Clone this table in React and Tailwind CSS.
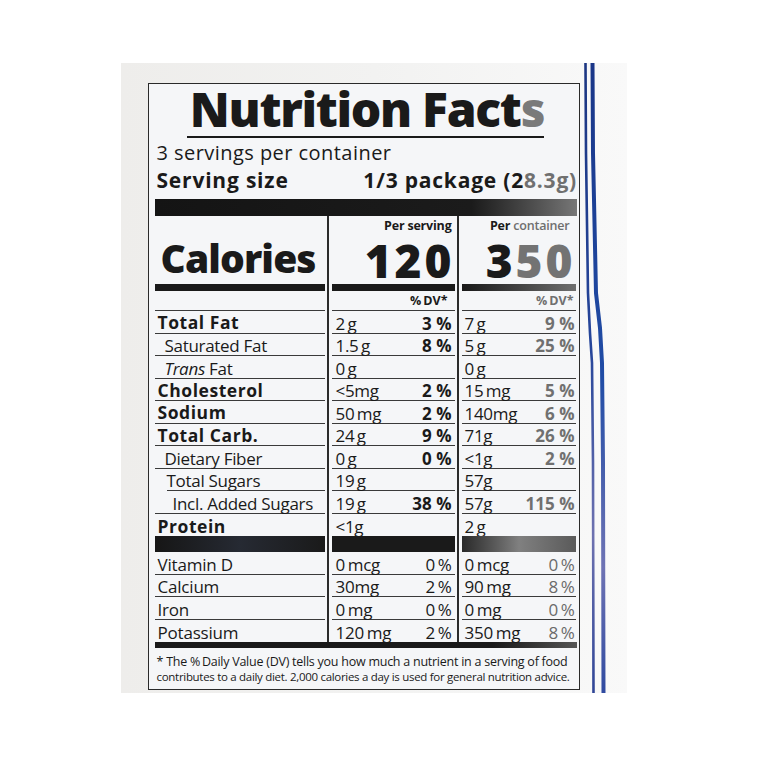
import React from "react";

const F = "font-['Open_Sans','Noto_Sans',sans-serif]";
const TS = "\u2009";

function Divider() {
  return (
    <div className="w-[7px] flex justify-center self-stretch shrink-0">
      <div className="w-[2px] bg-[#2b2b2b]" />
    </div>
  );
}

const nutrients = [
  { l: "Total Fat", b: true, ind: "pl-[3px]", a: `2${TS}g`, p: "3 %", a2: `7${TS}g`, p2: "9 %" },
  { l: "Saturated Fat", ind: "pl-[10px]", a: `1.5${TS}g`, p: "8 %", a2: `5${TS}g`, p2: "25 %" },
  { l: "Trans Fat", trans: true, ind: "pl-[10px]", a: `0${TS}g`, a2: `0${TS}g` },
  { l: "Cholesterol", b: true, ind: "pl-[3px]", a: "<5mg", p: "2 %", a2: `15${TS}mg`, p2: "5 %" },
  { l: "Sodium", b: true, ind: "pl-[3px]", a: `50${TS}mg`, p: "2 %", a2: "140mg", p2: "6 %" },
  { l: "Total Carb.", b: true, ind: "pl-[3px]", a: `24${TS}g`, p: "9 %", a2: "71g", p2: "26 %" },
  { l: "Dietary Fiber", ind: "pl-[10px]", a: `0${TS}g`, p: "0 %", a2: "<1g", p2: "2 %" },
  { l: "Total Sugars", ind: "pl-0", lineInd: true, a: `19${TS}g`, a2: "57g" },
  { l: "Incl. Added Sugars", ind: "pl-[18px]", a: `19${TS}g`, p: "38 %", a2: "57g", p2: "115 %" },
  { l: "Protein", b: true, ind: "pl-[3px]", a: "<1g", a2: `2${TS}g`, noLine: true },
];

const vitamins = [
  { l: "Vitamin D", a: `0${TS}mcg`, p: `0${TS}%`, a2: `0${TS}mcg`, p2: `0${TS}%` },
  { l: "Calcium", a: "30mg", p: `2${TS}%`, a2: `90${TS}mg`, p2: `8${TS}%` },
  { l: "Iron", a: `0${TS}mg`, p: `0${TS}%`, a2: `0${TS}mg`, p2: `0${TS}%` },
  { l: "Potassium", a: `120${TS}mg`, p: `2${TS}%`, a2: `350${TS}mg`, p2: `8${TS}%`, noLine: true },
];

function NutrientRow({ r }) {
  const line = r.noLine ? "" : "border-b border-[#3a3a3a]";
  return (
    <div className="flex h-[22.5px]">
      <div className="w-[170px] shrink-0 flex">
        <div
          className={`${r.lineInd ? "ml-[12px]" : ""} flex-1 flex items-end pb-[1px] ${line} ${r.ind} leading-none ${
            r.b ? "font-bold text-[17.5px] tracking-[0.55px]" : "font-normal text-[17px] tracking-[-0.3px]"
          }`}
        >
          {r.trans ? (
            <span>
              <i>Trans</i> Fat
            </span>
          ) : (
            r.l
          )}
        </div>
      </div>
      <Divider />
      <div className={`w-[123px] shrink-0 flex items-end justify-between pb-[1px] pl-[4px] pr-[3px] ${line} text-[17px] leading-none tracking-[-0.3px]`}>
        <span>{r.a}</span>
        <span className="font-bold tracking-[0px]">{r.p}</span>
      </div>
      <Divider />
      <div className={`w-[114px] shrink-0 flex items-end justify-between pb-[1px] pl-[3px] pr-[1px] ${line} text-[17px] leading-none tracking-[-0.3px]`}>
        <span>{r.a2}</span>
        <span className="font-bold tracking-[0px] text-[#707070]">{r.p2}</span>
      </div>
    </div>
  );
}

function VitaminRow({ r }) {
  const line = r.noLine ? "" : "border-b border-[#3a3a3a]";
  return (
    <div className="flex h-[22.5px]">
      <div className={`w-[170px] shrink-0 flex items-end pb-[1px] pl-[3px] ${line} text-[17px] leading-none tracking-[-0.2px]`}>
        {r.l}
      </div>
      <Divider />
      <div className={`w-[123px] shrink-0 flex items-end justify-between pb-[1px] pl-[4px] pr-[3px] ${line} text-[17px] leading-none tracking-[-0.2px]`}>
        <span>{r.a}</span>
        <span>{r.p}</span>
      </div>
      <Divider />
      <div className={`w-[114px] shrink-0 flex items-end justify-between pb-[1px] pl-[3px] pr-[1px] ${line} text-[17px] leading-none tracking-[-0.2px]`}>
        <span>{r.a2}</span>
        <span className="text-[#6a6a6a]">{r.p2}</span>
      </div>
    </div>
  );
}

function BlueLines() {
  return (
    <svg width="47" height="630" viewBox="0 0 47 630" className="shrink-0 block">
      <defs>
        <linearGradient id="bl1" gradientUnits="userSpaceOnUse" x1="0" y1="0" x2="0" y2="630">
          <stop offset="0" stopColor="#1c3682" />
          <stop offset="0.45" stopColor="#25459a" />
          <stop offset="0.75" stopColor="#6e72b0" />
          <stop offset="1" stopColor="#2f4596" />
        </linearGradient>
        <linearGradient id="bl2" gradientUnits="userSpaceOnUse" x1="0" y1="0" x2="0" y2="630">
          <stop offset="0" stopColor="#1a3688" />
          <stop offset="0.5" stopColor="#204ca6" />
          <stop offset="0.8" stopColor="#6e73b4" />
          <stop offset="1" stopColor="#2f4aa0" />
        </linearGradient>
      </defs>
      <path d="M5.5 0 L6 90 L8 230 L10 270 L12 300 L13 400 L13.5 630" fill="none" stroke="url(#bl1)" strokeWidth="2.6" />
      <path d="M12.5 0 L13 90 L16 230 L20 265 L22 300 L23 400 L23.5 630" fill="none" stroke="url(#bl2)" strokeWidth="4" />
    </svg>
  );
}

export default function App() {
  return (
    <div className={`w-[757px] h-[757px] bg-white pt-[63px] pl-[121px] ${F} text-[#1a1a1a]`}>
      <div className="w-[506px] h-[630px] flex items-start pl-[27px] bg-gradient-to-r from-[#eeedeb] via-[#f2f2f1] to-[#f9f9f9]">
        <div className="mt-[20px] w-[432px] h-[607px] shrink-0 border-[1.5px] border-[#2a2a2a] bg-[#f5f6f8] pl-[5.5px] pr-[2.5px]">
          {/* Title */}
          <div className="flex justify-center pt-[1px]">
            <div className="inline-block text-[48px] font-extrabold leading-[47px] tracking-[-1.3px] pb-[4px] border-b-2 border-[#1a1a1a] pl-[3px]">
              Nutrition Fact<span className="text-[#7a7a7a]">s</span>
            </div>
          </div>
          <div className="mt-[3px] pl-[2px] text-[20px] leading-[24px] tracking-[0.45px]">3 servings per container</div>
          <div className="mt-[3px] pl-[2px] flex justify-between text-[21px] leading-[24px] font-bold tracking-[0.8px]">
            <span>Serving size</span>
            <span className="-mr-[0.5px]">
              1/3 package (2<span className="text-[#707070]">8.3g)</span>
            </span>
          </div>
          <div className="mt-[7px] h-[17px] bg-gradient-to-r from-[#141414] via-[#1b1b1b] via-75% to-[#777]" />

          {/* Calories header */}
          <div className="flex h-[68px]">
            <div className="w-[170px] shrink-0 flex items-end pb-[7px] pl-[6px] text-[39px] font-extrabold leading-none tracking-[-0.9px]">
              Calories
            </div>
            <Divider />
            <div className="w-[123px] shrink-0 flex flex-col items-end pr-[3px]">
              <div className="mt-[2px] text-[12.5px] font-bold leading-[16px] tracking-[-0.2px]">Per serving</div>
              <div className="mt-[4px] -mr-[3px] text-[46px] font-extrabold leading-[44px] tracking-[3px]">120</div>
            </div>
            <Divider />
            <div className="w-[114px] shrink-0 flex flex-col items-end pr-[6px]">
              <div className="mt-[2px] text-[12.5px] font-bold leading-[16px] tracking-[-0.2px]">
                Per <span className="text-[#6f6f6f] font-semibold">container</span>
              </div>
              <div className="mt-[4px] -mr-[6px] text-[46px] font-extrabold leading-[44px] tracking-[3px]">
                3<span className="text-[#737373]">50</span>
              </div>
            </div>
          </div>

          {/* thin bars */}
          <div className="flex h-[7px]">
            <div className="w-[170px] shrink-0 bg-[#1a1a1a]" />
            <Divider />
            <div className="w-[123px] shrink-0 bg-[#1a1a1a]" />
            <Divider />
            <div className="w-[114px] shrink-0 bg-gradient-to-r from-[#1a1a1a] to-[#6f6f6f]" />
          </div>

          {/* %DV row */}
          <div className="flex h-[20px]">
            <div className="w-[170px] shrink-0 border-b border-[#3a3a3a]" />
            <Divider />
            <div className="w-[123px] shrink-0 flex items-end justify-end pr-[7px] pb-[3px] border-b border-[#3a3a3a] text-[12.5px] font-bold leading-none">
              %{TS}DV*
            </div>
            <Divider />
            <div className="w-[114px] shrink-0 flex items-end justify-end pr-[2px] pb-[3px] border-b border-[#3a3a3a] text-[12.5px] font-bold leading-none text-[#707070]">
              %{TS}DV*
            </div>
          </div>

          {nutrients.map((r) => (
            <NutrientRow key={r.l} r={r} />
          ))}

          {/* black bars */}
          <div className="flex h-[16px]">
            <div className="w-[170px] shrink-0 bg-gradient-to-r from-[#161616] via-[#262a33] to-[#1a1a1a]" />
            <Divider />
            <div className="w-[123px] shrink-0 bg-[#1a1a1a]" />
            <Divider />
            <div className="w-[114px] shrink-0 bg-gradient-to-r from-[#2a2a2a] via-[#808080] to-[#5a5a5a]" />
          </div>

          {vitamins.map((r) => (
            <VitaminRow key={r.l} r={r} />
          ))}

          <div className="h-[6px] bg-gradient-to-r from-[#1a1a1a] via-[#1a1a1a] via-80% to-[#555]" />

          <div className="pt-[6px] pl-[2px] whitespace-nowrap">
            <div className="text-[12.5px] leading-[15px] tracking-[-0.25px]">
              * The %{TS}Daily Value (DV) tells you how much a nutrient in a serving of food
            </div>
            <div className="text-[11.5px] leading-[15px] tracking-[-0.3px]">
              contributes to a daily diet. 2,000 calories a day is used for general nutrition advice.
            </div>
          </div>
        </div>
        <BlueLines />
      </div>
    </div>
  );
}
